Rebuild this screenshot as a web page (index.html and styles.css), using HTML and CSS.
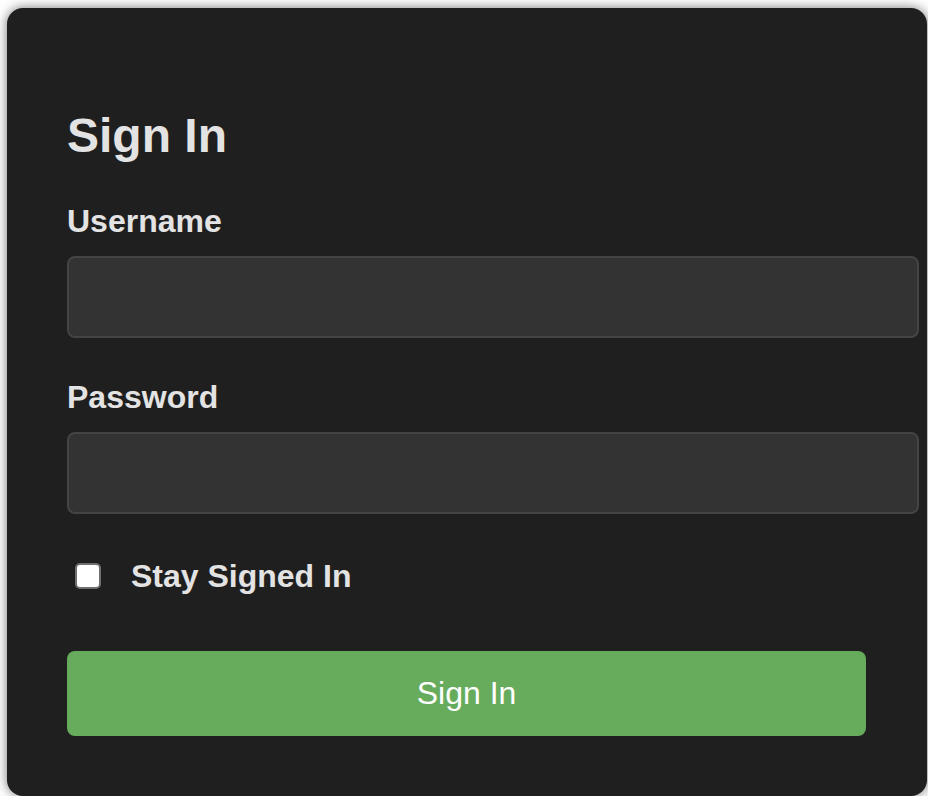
FILE: index.html
```html
<!DOCTYPE html>
<html lang="en">
<head>
<meta charset="utf-8">
<title>Sign In</title>
<link rel="stylesheet" href="styles.css">
</head>
<body>
  <main class="card">
    <h2 class="title">Sign In</h2>
    <form class="form" onsubmit="return false">
      <label class="label" for="username">Username</label>
      <input class="field" id="username" type="text">
      <label class="label label-pw" for="password">Password</label>
      <input class="field" id="password" type="password">
      <div class="remember">
        <input class="check" id="stay" type="checkbox">
        <label class="remember-text" for="stay">Stay Signed In</label>
      </div>
      <button class="submit" type="submit">Sign In</button>
    </form>
  </main>
</body>
</html>
```
FILE: styles.css
```css
html, body {
  margin: 0;
  padding: 0;
  background: #ffffff;
}

body {
  padding: 8px 0 0 7px;
  font-family: "Liberation Sans", Arial, Helvetica, sans-serif;
}

.card {
  box-sizing: border-box;
  width: 920px;
  height: 788px;
  padding: 60px 61px 60px 60px;
  background: #1f1f1f;
  border-radius: 16px;
  box-shadow: 0 0 12px rgba(0, 0, 0, 0.55);
  color: #e3e3e3;
  display: flex;
  flex-direction: column;
}

.title {
  margin: 40px 0 0 0;
  font-size: 48px;
  line-height: 1.15;
  font-weight: bold;
  color: #e3e3e3;
}

.form {
  display: flex;
  flex-direction: column;
  align-items: flex-start;
}

.label {
  margin-top: 40px;
  font-size: 32px;
  line-height: 1.15;
  font-weight: bold;
  color: #e3e3e3;
}

.label-pw {
  margin-top: 41px;
}

.field {
  box-sizing: content-box;
  margin-top: 16px;
  width: 100%;
  height: 78px;
  padding: 0 25px 0 24px;
  border: 2px solid #444444;
  border-radius: 8px;
  background: #333333;
  color: #e3e3e3;
  font-family: inherit;
  font-size: 32px;
  outline: none;
}

.remember {
  margin-top: 44px;
  display: flex;
  align-items: center;
}

.check {
  appearance: none;
  -webkit-appearance: none;
  box-sizing: border-box;
  width: 26px;
  height: 26px;
  margin: 0 30px 0 8px;
  background: #ffffff;
  border: 2px solid #6f6f6f;
  border-radius: 5px;
}

.remember-text {
  font-size: 32px;
  line-height: 1.15;
  font-weight: bold;
  color: #e3e3e3;
}

.submit {
  margin-top: 56px;
  width: 100%;
  height: 85px;
  border: none;
  border-radius: 8px;
  background: #67ac5d;
  color: #ffffff;
  font-family: inherit;
  font-size: 32px;
  cursor: pointer;
}
```
